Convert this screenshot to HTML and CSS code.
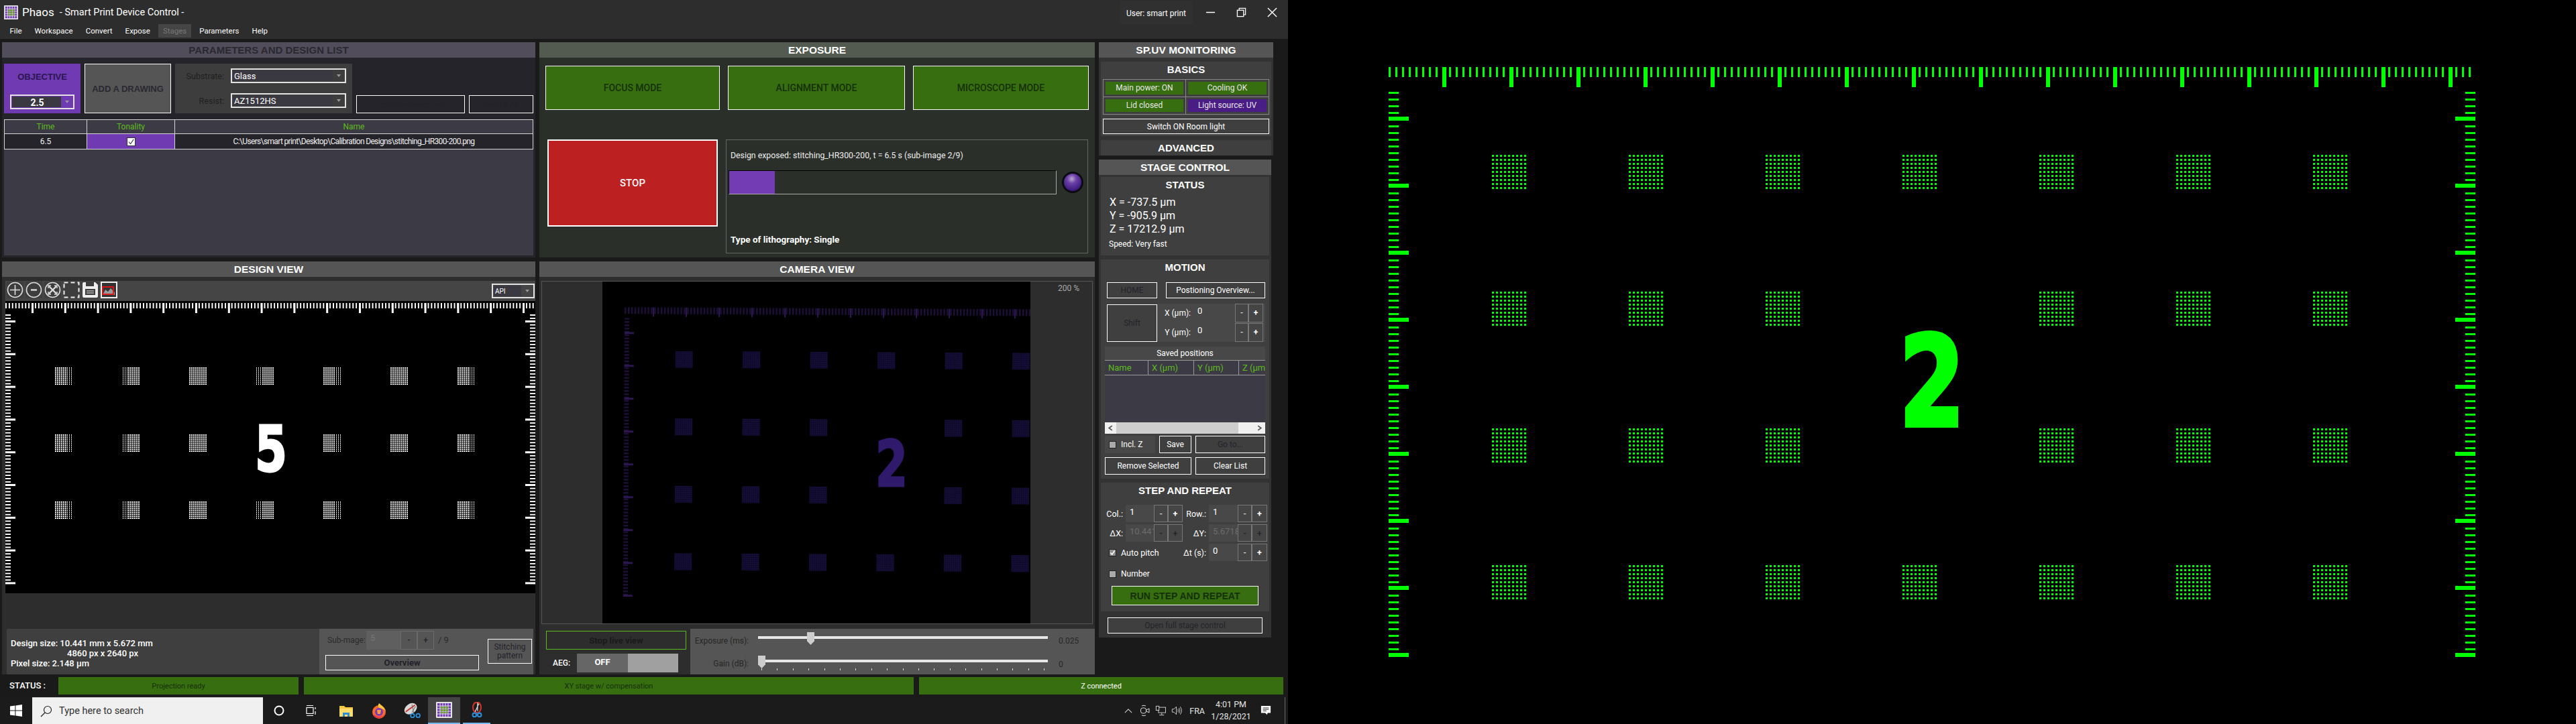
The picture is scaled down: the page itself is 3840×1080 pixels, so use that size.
FILE: index.html
```html
<!DOCTYPE html>
<html lang="en">
<head>
    <meta charset="UTF-8">
    <title>Phaos - Smart Print Device Control</title>
    <link rel="stylesheet" href="styles.css">
</head>
<body>
<svg class="defs" width="0" height="0">
    <defs>
        <symbol id="logo" viewBox="0 0 24 24">
            <rect width="24" height="24" rx="1" fill="#e4e4e4"/>
            <rect x="2" y="2" width="20" height="20" fill="#6f3ab2"/>
            <path d="M2 6h20M2 10h20M2 14h20M2 18h20M6 2v20M10 2v20M14 2v20M18 2v20" stroke="#e4e4e4" stroke-width="1"/>
            <path d="M7 7h3v3H7zM11 7h3v3h-3zM7 11h3v3H7zM11 11h3v3h-3zM15 7h3v3h-3zM15 11h3v3h-3zM7 15h3v2H7zM11 15h3v2h-3zM15 15h3v2h-3z" fill="#6aa51f"/>
        </symbol>
        <pattern id="photoTickTop" x="2070" y="100" width="10" height="15" patternUnits="userSpaceOnUse"><rect width="3" height="15" fill="#0f0"/></pattern>
        <pattern id="photoLongTop" x="2150" y="100" width="100" height="30" patternUnits="userSpaceOnUse"><rect width="6" height="30" fill="#0f0"/></pattern>
        <pattern id="photoTickSide" x="2070" y="137" width="15" height="10" patternUnits="userSpaceOnUse"><rect width="15" height="3" fill="#0f0"/></pattern>
        <pattern id="photoLongSide" x="2070" y="174" width="30" height="100" patternUnits="userSpaceOnUse"><rect width="30" height="6" fill="#0f0"/></pattern>
        <pattern id="photoDots" width="6" height="6" patternUnits="userSpaceOnUse"><rect width="3" height="3" fill="#0f0"/></pattern>
        <pattern id="photoBlocks" x="2224" y="231" width="204" height="204" patternUnits="userSpaceOnUse"><rect width="51" height="51" fill="url(#photoDots)"/></pattern>

        <pattern id="designTickTop" x="8" y="452" width="4.88" height="8" patternUnits="userSpaceOnUse"><rect width="1.7" height="8" fill="#fff" shape-rendering="crispEdges"/></pattern>
        <pattern id="designLongTop" x="47" y="452" width="48.8" height="15" patternUnits="userSpaceOnUse"><rect width="3" height="15" fill="#fff" shape-rendering="crispEdges"/></pattern>
        <pattern id="designTickSide" x="8" y="469" width="8" height="4.88" patternUnits="userSpaceOnUse"><rect width="8" height="1.7" fill="#fff" shape-rendering="crispEdges"/></pattern>
        <pattern id="designLongSide" x="8" y="478" width="15" height="48.8" patternUnits="userSpaceOnUse"><rect width="15" height="3" fill="#fff" shape-rendering="crispEdges"/></pattern>
        <pattern id="designDots" width="3" height="3" patternUnits="userSpaceOnUse"><rect width="2" height="2" fill="#fff" shape-rendering="crispEdges"/></pattern>
        <pattern id="designBlocks" x="82" y="548" width="100" height="100" patternUnits="userSpaceOnUse"><rect width="26" height="26" fill="url(#designDots)"/></pattern>
        <pattern id="designThin" x="82" y="0" width="3" height="3" patternUnits="userSpaceOnUse"><rect x="1" width="1" height="3" shape-rendering="crispEdges"/></pattern>

        <pattern id="camTickTop" x="931" y="460" width="4.9" height="10" patternUnits="userSpaceOnUse"><rect width="2.4" height="10" fill="#1e1038"/></pattern>
        <pattern id="camLongTop" x="973" y="460" width="49" height="14" patternUnits="userSpaceOnUse"><rect width="2" height="14" fill="#2c1750"/></pattern>
        <pattern id="camTickSide" x="931" y="476" width="7" height="4.9" patternUnits="userSpaceOnUse"><rect width="7" height="2.4" fill="#1e1038"/></pattern>
        <pattern id="camLongSide" x="931" y="497" width="14" height="49" patternUnits="userSpaceOnUse"><rect width="14" height="3" fill="#2c1750"/></pattern>
        <pattern id="camDots" width="3" height="3" patternUnits="userSpaceOnUse"><rect width="3" height="3" fill="#0b0822"/><rect width="2" height="2" fill="#1a1040"/></pattern>
        <pattern id="camBlocks" x="1007" y="525" width="100.5" height="100.6" patternUnits="userSpaceOnUse"><rect width="26" height="25" fill="url(#camDots)"/></pattern>
    </defs>
</svg>

<div class="app">
    <header class="chrome">
        <div class="titlebar">
            <svg class="app-logo"><use href="#logo"/></svg>
            <span class="app-name">Phaos</span>
            <span class="app-title">- Smart Print Device Control -</span>
            <span class="user">User: smart print</span>
            <svg class="win-btn" viewBox="0 0 16 16"><path d="M1 8h14" stroke="#fff" stroke-width="1.6"/></svg>
            <svg class="win-btn" viewBox="0 0 16 16" fill="none" stroke="#fff" stroke-width="1.4"><rect x="1.5" y="4.5" width="10" height="10"/><path d="M4.5 4V1.5h10v10H12"/></svg>
            <svg class="win-btn" viewBox="0 0 16 16"><path d="M1 1l14 14M15 1L1 15" stroke="#fff" stroke-width="1.5"/></svg>
        </div>
        <nav class="menubar">
            <span>File</span><span>Workspace</span><span>Convert</span><span>Expose</span><span class="menu-off">Stages</span><span>Parameters</span><span>Help</span>
        </nav>
    </header>

    <main class="main">
        <section class="panel params">
            <h2 class="panel-head">PARAMETERS AND DESIGN LIST</h2>
            <div class="param-top">
                <div class="objective">
                    <div class="objective-title">OBJECTIVE</div>
                    <div class="select select-obj"><span>2.5</span><i></i></div>
                </div>
                <div class="btn btn-drawing">ADD A DRAWING</div>
                <div class="substrate">
                    <label>Substrate:</label>
                    <div class="select"><span>Glass</span><i></i></div>
                    <label>Resist:</label>
                    <div class="select"><span>AZ1512HS</span><i></i></div>
                </div>
                <div class="btn btn-off btn-remove">Remove selected</div>
                <div class="btn btn-off btn-delete">Delete All</div>
            </div>
            <div class="design-table">
                <div class="cell cell-head">Time</div>
                <div class="cell cell-head">Tonality</div>
                <div class="cell cell-head">Name</div>
                <div class="cell">6.5</div>
                <div class="cell cell-purple"><span class="tick-box">
                    <svg viewBox="0 0 12 12"><path d="M2 6l3 3.5L10 2" fill="none" stroke="#333" stroke-width="1.2"/></svg></span></div>
                <div class="cell cell-path">C:\Users\smart print\Desktop\Calibration Designs\stitching_HR300-200.png</div>
            </div>
            <div class="design-list"></div>
        </section>

        <section class="panel exposure">
            <h2 class="panel-head panel-head-light">EXPOSURE</h2>
            <div class="modes">
                <div class="btn btn-mode mode-focus">FOCUS MODE</div>
                <div class="btn btn-mode mode-align">ALIGNMENT MODE</div>
                <div class="btn btn-mode mode-micro">MICROSCOPE MODE</div>
            </div>
            <div class="run-row">
                <div class="stop">STOP</div>
                <div class="run-info">
                    <div class="run-text">Design exposed: stitching_HR300-200, t = 6.5 s (sub-image 2/9)</div>
                    <div class="run-bar-row">
                        <div class="run-bar"><div class="run-fill" style="width: 14%"></div></div>
                        <div class="led"></div>
                    </div>
                    <div class="run-type">Type of lithography: Single</div>
                </div>
            </div>
        </section>

        <aside class="side">
            <section class="panel monitoring">
                <h2 class="panel-head panel-head-light">SP.UV MONITORING</h2>
                <div class="box basics">
                    <h3 class="box-title">BASICS</h3>
                    <div class="state-grid">
                        <div class="state-cell"><span class="state">Main power: ON</span></div>
                        <div class="state-cell"><span class="state">Cooling OK</span></div>
                        <div class="state-cell"><span class="state">Lid closed</span></div>
                        <div class="state-cell"><span class="state state-uv">Light source: UV</span></div>
                    </div>
                    <div class="btn btn-room">Switch ON Room light</div>
                </div>
                <div class="box advanced"><h3 class="box-title">ADVANCED</h3></div>
            </section>

            <section class="panel stage">
                <h2 class="panel-head panel-head-light">STAGE CONTROL</h2>
                <div class="box status-box">
                    <h3 class="box-title">STATUS</h3>
                    <div class="coords">
                        <div>X = -737.5 µm</div>
                        <div>Y = -905.9 µm</div>
                        <div>Z = 17212.9 µm</div>
                    </div>
                    <div class="speed">Speed: Very fast</div>
                </div>

                <div class="box motion">
                    <h3 class="box-title box-title-tall">MOTION</h3>
                    <div class="motion-row">
                        <div class="btn btn-off btn-home">HOME</div>
                        <div class="btn btn-pos">Postioning Overview...</div>
                    </div>
                    <div class="motion-row shift-row">
                        <div class="btn btn-off btn-shift">Shift</div>
                        <div class="shift-grid">
                            <label>X (µm):</label>
                            <div class="field">0</div><div class="spin">-</div><div class="spin spin-plus">+</div>
                            <label>Y (µm):</label>
                            <div class="field">0</div><div class="spin">-</div><div class="spin spin-plus">+</div>
                        </div>
                    </div>
                    <div class="saved">
                        <div class="saved-head">Saved positions</div>
                        <div class="saved-cols">
                            <span>Name</span><span>X (µm)</span><span>Y (µm)</span><span>Z (µm)</span>
                        </div>
                        <div class="saved-list"></div>
                        <div class="scroll">
                            <svg class="scroll-arrow" viewBox="0 0 8 8"><path d="M6 1L2 4l4 3" fill="none" stroke="#555" stroke-width="1.6"/></svg>
                            <div class="scroll-thumb"></div>
                            <svg class="scroll-arrow" viewBox="0 0 8 8"><path d="M2 1l4 3-4 3" fill="none" stroke="#555" stroke-width="1.6"/></svg>
                        </div>
                        <div class="saved-actions">
                            <div class="incl"><span class="check"></span>Incl. Z</div>
                            <div class="btn">Save</div>
                            <div class="btn btn-off">Go to...</div>
                            <div class="btn btn-wide">Remove Selected</div>
                            <div class="btn btn-clear">Clear List</div>
                        </div>
                    </div>
                </div>

                <div class="box repeat">
                    <h3 class="box-title box-title-step">STEP AND REPEAT</h3>
                    <div class="repeat-grid">
                        <label>Col.:</label><div class="field">1</div><div class="spin">-</div><div class="spin spin-plus">+</div>
                        <label>Row.:</label><div class="field">1</div><div class="spin">-</div><div class="spin spin-plus">+</div>
                        <label>ΔX:</label><div class="field field-off">10.441</div><div class="spin spin-off">-</div><div class="spin spin-off">+</div>
                        <label>ΔY:</label><div class="field field-off">5.6718</div><div class="spin spin-off">-</div><div class="spin spin-off">+</div>
                        <div class="check-line"><span class="check check-on"><svg viewBox="0 0 12 12"><path d="M2 6l3 3.5L10 2" fill="none" stroke="#fff" stroke-width="2"/></svg></span>Auto pitch</div>
                        <label>Δt (s):</label><div class="field">0</div><div class="spin">-</div><div class="spin spin-plus">+</div>
                    </div>
                    <div class="check-line number-line"><span class="check"></span>Number</div>
                    <div class="btn btn-run">RUN STEP AND REPEAT</div>
                </div>
                <div class="btn btn-off btn-full">Open full stage control</div>
            </section>
        </aside>

        <section class="panel design">
            <h2 class="panel-head">DESIGN VIEW</h2>
            <div class="toolbar">
                <svg class="tool" viewBox="0 0 25 25" fill="none" stroke="#ddd" stroke-width="1.6"><circle cx="12.500" cy="12.500" r="11"/><path d="M12.500 5v15M5 12.500h15"/></svg>
                <svg class="tool" viewBox="0 0 25 25" fill="none" stroke="#ddd" stroke-width="1.6"><circle cx="12.500" cy="12.500" r="11"/><path d="M8 12.500h9" stroke-width="2.400"/></svg>
                <svg class="tool" viewBox="0 0 25 25" fill="none" stroke="#ddd" stroke-width="1.6"><circle cx="12.500" cy="12.500" r="11"/><path d="M7 7l11 11M18 7L7 18" stroke-width="2.400"/><path d="M6 10V6h4M19 10V6h-4M6 15v4h4M19 15v4h-4" stroke-width="1.400"/></svg>
                <svg class="tool" viewBox="0 0 25 25" fill="none" stroke="#eee" stroke-width="2" stroke-dasharray="6 4"><rect x="1.500" y="1.500" width="22" height="22"/></svg>
                <svg class="tool" viewBox="0 0 25 25"><path d="M1 3q0-2 2-2h17l4 4v17q0 2-2 2H3q-2 0-2-2z" fill="#eee"/><rect x="6" y="1" width="12" height="6" fill="#3d3d3d"/><rect x="5" y="11" width="15" height="9" fill="#3d3d3d"/><path d="M7 14h11M7 17h11" stroke="#eee"/></svg>
                <svg class="tool tool-image" viewBox="0 0 25 25"><rect x="1" y="1" width="23" height="23" fill="#333" stroke="#eee" stroke-width="2"/><path d="M3 20l4-8 4 3 4-5 6 6v4H3z" fill="#999"/><rect x="3" y="8" width="16" height="11" fill="none" stroke="#e21212" stroke-width="1.800"/></svg>
                <div class="select select-view"><span>API</span><i></i></div>
            </div>
            <div class="design-canvas">
                <svg class="design-svg" viewBox="8 449 790 436" width="790" height="436">
                    <rect x="8" y="452" width="788" height="8" fill="url(#designTickTop)"/>
                    <rect x="8" y="452" width="788" height="15" fill="url(#designLongTop)"/>
                    <rect x="8" y="469" width="8" height="403" fill="url(#designTickSide)"/>
                    <rect x="8" y="469" width="15" height="403" fill="url(#designLongSide)"/>
                    <rect x="790" y="469" width="8" height="403" fill="url(#designTickSide)"/>
                    <rect x="783" y="478" width="15" height="394" fill="url(#designLongSide)"/>
                    <rect x="82" y="548" width="626" height="226" fill="url(#designBlocks)"/>
                    <rect x="99" y="548" width="9" height="226" fill="url(#designThin)"/>
                    <rect x="182" y="548" width="9" height="226" fill="url(#designThin)"/>
                    <rect x="299" y="548" width="9" height="226" fill="url(#designThin)"/>
                    <rect x="382" y="548" width="9" height="226" fill="url(#designThin)"/>
                    <rect x="499" y="548" width="9" height="226" fill="url(#designThin)"/>
                    <rect x="582" y="548" width="9" height="226" fill="url(#designThin)"/>
                    <rect x="699" y="548" width="9" height="226" fill="url(#designThin)"/>
                    <rect x="380" y="646" width="30" height="30"/>
                    <text class="digit digit-design" x="404" y="703" textLength="48" lengthAdjust="spacingAndGlyphs">5</text>
                </svg>
            </div>
            <div class="design-bottom">
                <div class="design-info">
                    <div>Design size: 10.441 mm x 5.672 mm</div>
                    <div class="info-indent">4860 px x 2640 px</div>
                    <div>Pixel size: 2.148 µm</div>
                </div>
                <div class="sub-image">
                    <div class="sub-left">
                        <div class="sub-row">
                            <label>Sub-mage:</label>
                            <div class="field field-off sub-field">5</div>
                            <div class="spin spin-off sub-spin">-</div>
                            <div class="spin spin-off sub-spin">+</div>
                            <span class="sub-total">/ 9</span>
                        </div>
                        <div class="btn btn-off btn-overview">Overview</div>
                    </div>
                    <div class="btn btn-off btn-stitch">Stitching<br>pattern</div>
                </div>
            </div>
        </section>

        <section class="panel camera">
            <h2 class="panel-head">CAMERA VIEW</h2>
            <div class="camera-frame">
                <svg class="camera-svg" viewBox="899 420 638 510" width="638" height="510">
                    <g transform="rotate(0.3 1270 675)">
                        <rect x="931" y="460" width="610" height="10" fill="url(#camTickTop)"/>
                        <rect x="931" y="460" width="610" height="14" fill="url(#camLongTop)"/>
                        <rect x="931" y="476" width="7" height="416" fill="url(#camTickSide)"/>
                        <rect x="931" y="476" width="14" height="416" fill="url(#camLongSide)"/>
                        <rect x="1007" y="525" width="540" height="330" fill="url(#camBlocks)"/>
                        <rect x="1305" y="622" width="34" height="132"/>
                    </g>
                    <text class="digit digit-camera" x="1330" y="725" textLength="48" lengthAdjust="spacingAndGlyphs">2</text>
                </svg>
                <span class="zoom-label">200 %</span>
            </div>
            <div class="camera-bottom">
                <div class="live">
                    <div class="btn-live">Stop live view</div>
                    <div class="aeg">
                        <span class="aeg-label">AEG:</span>
                        <div class="toggle"><span class="toggle-off">OFF</span><span class="toggle-knob"></span></div>
                    </div>
                </div>
                <div class="sliders">
                    <label>Exposure (ms):</label>
                    <div class="slider"><div class="track"></div><div class="thumb thumb-exposure"></div></div>
                    <span class="slider-val">0.025</span>
                    <label>Gain (dB):</label>
                    <div class="slider"><div class="track"></div><div class="thumb"></div><div class="slider-ticks"></div></div>
                    <span class="slider-val">0</span>
                </div>
            </div>
        </section>
    </main>

    <div class="statusbar">
        <span class="status-label">STATUS :</span>
        <div class="status-cell">Projection ready</div>
        <div class="status-cell">XY stage w/ compensation</div>
        <div class="status-cell status-lit">Z connected</div>
    </div>

    <footer class="taskbar">
        <svg class="win-logo" viewBox="0 0 18 18"><path d="M0 2.600l7.400-1v7H0zM8.400 1.400L18 0v8.600H8.400zM0 9.600h7.400v7l-7.400-1zM8.400 9.600H18V18l-9.600-1.400z" fill="#fff"/></svg>
        <div class="search">
            <svg class="search-icon" viewBox="0 0 18 18" fill="none" stroke="#222" stroke-width="1.2"><circle cx="11" cy="7" r="5.500"/><path d="M7 11l-6 6"/></svg>
            <span>Type here to search</span>
        </div>
        <svg class="task-icon cortana" viewBox="0 0 18 18"><circle cx="9" cy="9" r="6.500" fill="none" stroke="#fff" stroke-width="2"/></svg>
        <svg class="task-icon taskview" viewBox="0 0 18 18" fill="none" stroke="#fff" stroke-width="1.2"><rect x="2" y="4.500" width="10" height="9"/><path d="M2 1.500h10M2 16.500h10M15 4v3M15 10v5"/></svg>
        <svg class="task-icon explorer" viewBox="0 0 22 20"><path d="M1 3h7l2 2h11v14H1z" fill="#f5c542"/><rect x="1" y="7" width="20" height="12" fill="#ffdc6b"/><rect x="6" y="13" width="10" height="6" fill="#2a8fd8"/><rect x="9" y="16" width="4" height="3" fill="#ffdc6b"/></svg>
        <svg class="task-icon firefox" viewBox="0 0 24 24"><circle cx="12" cy="14" r="10" fill="#ff6a2b"/><path d="M12 1c3 3 8 5 10 12-2-3-5-4-7-4-3 0-6-3-3-8z" fill="#ffc83d"/><circle cx="12" cy="14" r="6" fill="#7a3ab8"/><path d="M5 18c3 4 11 5 16-1-3 6-12 8-17 3z" fill="#e8265e"/><path d="M9 11l6 0-1 6-4 0z" fill="#ff9a3d"/></svg>
        <svg class="task-icon snip" viewBox="0 0 28 26"><ellipse cx="12" cy="10" rx="11" ry="8" fill="#d8d8d8" transform="rotate(-35 12 10)"/><path d="M4 15L19 4" stroke="#c9342b" stroke-width="2"/><path d="M14 3l3 13M20 6l-6 10" stroke="#777" stroke-width="1.2"/><circle cx="15" cy="21" r="3" fill="none" stroke="#2a8fd8" stroke-width="2"/><circle cx="24" cy="21" r="3" fill="none" stroke="#2a8fd8" stroke-width="2"/></svg>
        <div class="task-active"><svg class="task-logo"><use href="#logo"/></svg></div>
        <div class="task-open">
            <svg class="task-logo" viewBox="0 0 22 26"><ellipse cx="11" cy="9" rx="6.500" ry="8.500" fill="none" stroke="#c9342b" stroke-width="2.400"/><path d="M12 1v14M8 16l6-13" stroke="#ddd" stroke-width="1.400"/><circle cx="7" cy="21" r="3" fill="none" stroke="#2a8fd8" stroke-width="2.200"/><circle cx="15" cy="21" r="3" fill="none" stroke="#2a8fd8" stroke-width="2.200"/></svg>
        </div>
        <div class="tray">
            <svg class="tray-icon chevron" viewBox="0 0 14 10"><path d="M1 8l6-6 6 6" fill="none" stroke="#ddd" stroke-width="1.2"/></svg>
            <svg class="tray-icon tray-cam" viewBox="0 0 16 18" fill="none" stroke="#ddd"><rect x="1.500" y="5" width="8" height="8" rx="3"/><path d="M10 8l4-2v6l-4-2M3 2q3-1.500 6 0M3 16q3 1.500 6 0"/></svg>
            <svg class="tray-icon" viewBox="0 0 18 18" fill="none" stroke="#ddd"><rect x="5.500" y="3.500" width="12" height="9"/><rect x="1.500" y="1.500" width="5" height="7" fill="#1b1b1b"/><path d="M11 13v3M7 16.500h8"/></svg>
            <svg class="tray-icon tray-vol" viewBox="0 0 18 18" fill="none" stroke="#ddd"><path d="M1.500 6.500h3l4-4v13l-4-4h-3zM11 6.500q1.500 2.500 0 5M13 4.500q3 4.500 0 9M15 2.500q4.500 6.500 0 13"/></svg>
            <span class="tray-lang">FRA</span>
            <div class="clock"><div>4:01 PM</div><div>1/28/2021</div></div>
            <svg class="tray-icon notify" viewBox="0 0 18 18"><path d="M1 1h16v12h-5l-1 3-3-3H1z" fill="#fff"/><path d="M4 4.500h10M4 7h10M4 9.500h6" stroke="#1b1b1b"/></svg>
            <div class="show-desktop"></div>
        </div>
    </footer>
</div>

<div class="photo">
    <svg viewBox="1920 0 1920 1080" width="1920" height="1080">
        <rect x="2070" y="100" width="1620" height="15" fill="url(#photoTickTop)"/>
        <rect x="2150" y="100" width="1510" height="30" fill="url(#photoLongTop)"/>
        <rect x="2070" y="137" width="15" height="843" fill="url(#photoTickSide)"/>
        <rect x="2070" y="137" width="30" height="843" fill="url(#photoLongSide)"/>
        <rect x="3675" y="137" width="15" height="843" fill="url(#photoTickSide)"/>
        <rect x="3660" y="137" width="30" height="843" fill="url(#photoLongSide)"/>
        <rect x="2224" y="231" width="1275" height="690" fill="url(#photoBlocks)"/>
        <rect x="2830" y="430" width="60" height="265"/>
        <text class="digit digit-photo" x="2880" y="635" textLength="98" lengthAdjust="spacingAndGlyphs">2</text>
    </svg>
</div>
</body>
</html>
```

FILE: styles.css
```css
* {
    margin: 0;
    padding: 0;
    box-sizing: border-box;
}
body {
    width: 3840px;
    height: 1080px;
    display: flex;
    background: #000;
    overflow: hidden;
    font-family: Roboto, "Liberation Sans", sans-serif;
    font-size: 12px;
    color: #fff;
}
.defs {
    position: absolute;
}
.app {
    width: 1920px;
    height: 1080px;
    flex: none;
    display: flex;
    flex-direction: column;
    background: #1a1a1a;
}
.photo {
    width: 1920px;
    height: 1080px;
    flex: none;
}
.photo svg {
    display: block;
}

/* title and menu */
.chrome {
    height: 58px;
    background: #2d2d2d;
}
.titlebar {
    height: 36px;
    display: flex;
    align-items: center;
    padding-left: 6px;
}
.app-logo {
    width: 21px;
    height: 21px;
}
.app-name {
    margin-left: 6px;
    font-size: 17px;
}
.app-title {
    margin-left: 8px;
    font-size: 14.5px;
    flex: 1;
}
.user {
    width: 109px;
    height: 35px;
    line-height: 38px;
    text-align: center;
    background: #303030;
    font-size: 12px;
    margin-right: 19px;
}
.win-btn {
    width: 15px;
    height: 15px;
    margin-right: 31px;
}
.win-btn:last-child {
    margin-right: 16px;
}
.menubar {
    height: 22px;
    display: flex;
    padding-left: 5px;
    align-items: flex-start;
    font-size: 11.5px;
}
.menubar span {
    height: 20px;
    line-height: 20px;
    padding: 0 9.5px;
}
.menubar .menu-off {
    background: #454545;
    color: #777;
    padding: 0 7px;
    margin: 0 2.5px;
}

/* main layout */
.main {
    height: 943px;
    margin: 5px 0 0 3px;
    display: grid;
    grid-template-columns: 795px 828px 260px;
    grid-template-rows: 321px 616px;
    column-gap: 6px;
    row-gap: 6px;
}
.panel {
    display: flex;
    flex-direction: column;
    background: #2d2d2d;
}
.panel-head {
    height: 23px;
    flex: none;
    line-height: 23px;
    text-align: center;
    background: #555;
    font-family: "Liberation Sans", sans-serif;
    font-size: 15.5px;
    font-weight: bold;
    color: #fff;
}
.btn {
    display: flex;
    align-items: center;
    justify-content: center;
    border: 1px solid #fff;
    color: #fff;
    background: transparent;
}
.btn-off {
    color: #24222a;
}

/* parameters */
.params {
    background: #26242b;
}
.params .panel-head {
    background: #514d5a;
    color: #2a2830;
    font-size: 15px;
}
.param-top {
    height: 74px;
    margin: 9px 3px 0;
    display: flex;
    gap: 6px;
    align-items: flex-end;
}
.objective {
    width: 114px;
    height: 74px;
    padding: 0 9px;
    background: #6f3ab2;
    text-align: center;
}
.objective-title {
    margin-top: 12px;
    font-family: "Liberation Sans", sans-serif;
    font-size: 13px;
    font-weight: bold;
    color: #2a1650;
}
.select {
    height: 22px;
    display: flex;
    align-items: stretch;
    border: 2px solid #e2e2e2;
    font-size: 13px;
    position: relative;
}
.select span {
    flex: 1;
    padding-left: 2px;
    background: #3a3840;
    line-height: 18px;
    margin: 1px 0 1px 1px;
}
.select i {
    width: 18px;
    position: relative;
}
.select i::after {
    content: "";
    position: absolute;
    left: 6px;
    top: 7px;
    border: 3px solid transparent;
    border-top: 4px solid #999;
}
.select-obj {
    margin-top: 19px;
    font-size: 14px;
    font-weight: bold;
}
.btn-drawing {
    width: 129px;
    height: 74px;
    background: #555;
    color: #2a2830;
    font-family: "Liberation Sans", sans-serif;
    font-size: 13px;
    font-weight: bold;
}
.substrate {
    width: 264px;
    height: 74px;
    padding: 7px 9px 0 0;
    background: #3d3d3d;
    display: grid;
    grid-template-columns: 73px 172px;
    column-gap: 10px;
    row-gap: 15px;
    grid-auto-rows: 22px;
    align-items: center;
}
.substrate label {
    padding: 0;
    text-align: right;
    font-size: 12.5px;
    color: #1f1f1f;
}
.btn-remove {
    width: 162px;
    height: 27px;
    font-size: 13px;
}
.btn-delete {
    width: 96px;
    height: 27px;
    font-size: 13px;
}
.design-table {
    margin: 9px 3px 0;
    display: grid;
    grid-template-columns: 123px 131px 1fr;
    grid-template-rows: 21px 23px;
    border: 1px solid #d4d4d4;
    border-bottom: none;
    background: #26242b;
}
.cell {
    display: flex;
    align-items: center;
    justify-content: center;
    border-right: 1px solid #d4d4d4;
    border-bottom: 1px solid #d4d4d4;
    font-size: 12px;
    color: #eee;
}
.cell:nth-child(3n) {
    border-right: none;
}
.cell-head {
    background: #3c3a44;
    color: #5cbb1c;
}
.cell-purple {
    background: #6f3ab2;
}
.cell-path {
    letter-spacing: -0.65px;
}
.tick-box {
    width: 13px;
    height: 13px;
    background: #fff;
    border: 1px solid #333;
    display: block;
}
.tick-box svg {
    display: block;
}
.design-list {
    margin: 0 3px 3px;
    flex: 1;
    background: #3c3a44;
}

/* exposure */
.exposure {
    background: #2b2f2a;
}
.panel-head-light {
    background: #555;
}
.exposure .panel-head {
    background: #535a50;
}
.modes {
    margin: 12px 9px 0;
    display: flex;
    gap: 12px;
}
.btn-mode {
    height: 66px;
    background: #376e10;
    color: #15300a;
    font-size: 14px;
    font-weight: 500;
}
.mode-focus { width: 260px; }
.mode-align { width: 264px; }
.mode-micro { width: 262px; }
.run-row {
    display: flex;
    align-items: flex-start;
    margin: 44px 0 0 12px;
}
.stop {
    width: 254px;
    height: 130px;
    display: flex;
    align-items: center;
    justify-content: center;
    background: #bd2020;
    border: 2px solid #fff;
    font-size: 15px;
    font-weight: 500;
}
.run-info {
    width: 540px;
    height: 170px;
    margin-left: 12px;
    padding: 16px 3px 0;
    display: flex;
    flex-direction: column;
    border: 1px solid #666;
}
.run-text {
    margin-left: 3px;
    height: 16px;
    font-size: 12.3px;
    color: #eee;
}
.run-bar-row {
    margin-top: 13px;
    display: flex;
    align-items: center;
    gap: 8px;
}
.run-bar {
    width: 489px;
    height: 36px;
    border-top: 1px solid #000;
    border-left: 1px solid #000;
    border-right: 1px solid #aaa;
    border-bottom: 1px solid #aaa;
}
.run-fill {
    height: 100%;
    background: #733cb4;
}
.led {
    width: 32px;
    height: 32px;
    border-radius: 50%;
    border: 3px solid #0b0b12;
    background: radial-gradient(circle at 45% 30%, #b9a9cf 0, #6b3fa8 30%, #3a1a7a 75%);
}
.run-type {
    margin: auto 0 12px 3px;
    font-size: 13.5px;
    font-weight: 700;
}

/* right column */
.side {
    grid-row: 1 / 3;
    grid-column: 3;
    display: flex;
    flex-direction: column;
    gap: 6px;
}
.monitoring {
    height: 169px;
    background: #333;
}
.stage {
    width: 257px;
    height: 713px;
    background: #333;
}
.box {
    background: #3f3f3f;
}
.box-title {
    height: 24px;
    line-height: 24px;
    text-align: center;
    font-family: "Liberation Sans", sans-serif;
    font-size: 15px;
    font-weight: bold;
}
.basics {
    margin: 6px 3px 0;
    height: 111px;
}
.basics .box-title {
    height: 26px;
}
.state-grid {
    margin: 0 3px;
    height: 53px;
    display: grid;
    grid-template-columns: 123px 1fr;
    grid-template-rows: 1fr 1fr;
    border: 1px solid #888;
}
.state-cell {
    padding: 3px;
    display: flex;
}
.state-cell:nth-child(odd) {
    border-right: 1px solid #888;
}
.state-cell:nth-child(-n+2) {
    border-bottom: 1px solid #888;
}
.state {
    flex: 1;
    display: flex;
    align-items: center;
    justify-content: center;
    background: #376e10;
    color: #e6e6e6;
}
.state-uv {
    background: #4a1d86;
}
.btn-room {
    margin: 6px 3px 0;
    height: 23px;
}
.advanced {
    margin: 6px 3px 0;
    height: 23px;
}
.status-box {
    margin: 3px 3px 0;
    height: 117px;
}
.coords {
    margin: 4px 0 0 13px;
    font-size: 16px;
    line-height: 20px;
}
.speed {
    margin: 5px 0 0 12px;
}
.motion {
    margin: 6px 3px 0;
    height: 327px;
}
.box-title-tall {
    height: 34px;
}
.motion-row {
    display: flex;
    margin-left: 9px;
}
.btn-home {
    width: 75px;
    height: 24px;
}
.btn-pos {
    width: 148px;
    height: 24px;
    margin-left: 13px;
}
.shift-row {
    margin-top: 9px;
}
.btn-shift {
    width: 75px;
    height: 56px;
}
.shift-grid {
    width: 161px;
    height: 57px;
    margin-top: -1px;
    display: grid;
    grid-template-columns: 54px 62px 20px 22px;
    grid-auto-rows: 28px;
    row-gap: 1px;
    background: #484848;
    align-items: stretch;
}
label {
    display: flex;
    align-items: center;
    justify-content: flex-end;
    padding-right: 4px;
}
.field {
    padding: 3px 0 0 6px;
    background: #484848;
    overflow: hidden;
    white-space: nowrap;
    font-size: 13px;
}
.field-off {
    color: #6c6c6c;
}
.spin {
    display: flex;
    align-items: center;
    justify-content: center;
    border: 1px solid #777;
    background: #454545;
    color: #ddd;
    font-weight: 500;
}
.spin-plus {
    color: #fff;
    font-weight: bold;
}
.spin-off {
    color: #222;
}
.saved {
    width: 239px;
    margin: 7px 0 0 6px;
}
.saved-head {
    height: 20px;
    line-height: 20px;
    text-align: center;
    background: #484848;
}
.saved-cols {
    height: 23px;
    display: grid;
    grid-template-columns: 65px 68px 67px 1fr;
    overflow: hidden;
    background: #3c3a44;
    border-top: 1px solid #999;
    border-bottom: 1px solid #999;
    color: #5cbb1c;
    font-size: 13px;
    line-height: 21px;
}
.saved-cols span {
    padding-left: 5px;
    border-right: 1px solid #999;
    white-space: nowrap;
}
.saved-cols span:last-child {
    border-right: none;
}
.saved-list {
    height: 70px;
    background: #3c3a44;
}
.scroll {
    height: 17px;
    display: flex;
    align-items: stretch;
    justify-content: space-between;
    background: #f0f0f0;
}
.scroll-arrow {
    width: 17px;
    height: 17px;
    padding: 4px;
}
.scroll-thumb {
    width: 182px;
    margin-right: auto;
    background: #cdcdcd;
}
.saved-actions {
    margin-top: 3px;
    display: grid;
    grid-template-columns: 75px 48px 104px;
    grid-auto-rows: 26px;
    column-gap: 6px;
    row-gap: 6px;
}
.incl {
    display: flex;
    align-items: center;
    background: #484848;
}
.check {
    width: 11px;
    height: 11px;
    margin: 0 7px 0 6px;
    background: #aaa;
    border: 1px solid #222;
    flex: none;
}
.check svg {
    display: block;
}
.btn-wide {
    grid-column: 1 / 3;
}
.repeat {
    margin: 6px 3px 0;
    height: 192px;
}
.box-title-step {
    height: 33px;
    line-height: 24px;
}
.repeat-grid {
    display: grid;
    grid-template-columns: 37px 42px 21px 22px 39px 43px 21px 23px;
    grid-auto-rows: 26px;
    row-gap: 3px;
    font-size: 12.5px;
}
.repeat-grid .check-line {
    grid-column: 1 / 5;
}
.check-line {
    display: flex;
    align-items: center;
    padding-left: 6px;
}
.check-on {
    background: #8f8f8f;
}
.number-line {
    height: 37px;
    padding-top: 1px;
}
.btn-run {
    width: 219px;
    height: 29px;
    margin-left: 16px;
    background: #376e10;
    color: #15300a;
    font-family: "Liberation Sans", sans-serif;
    font-size: 14px;
    font-weight: bold;
}
.btn-full {
    width: 231px;
    height: 24px;
    margin: 9px 0 0 13px;
    background: #3f3f3f;
}

/* design view */
.toolbar {
    height: 30px;
    margin: 6px 0 0 5px;
    padding: 1px 0 0 2px;
    display: flex;
    gap: 3px;
    background: #454545;
    position: relative;
}
.tool {
    width: 25px;
    height: 25px;
    background: #3d3d3d;
}
.tool-image {
    background: none;
}
.select-view {
    width: 64px;
    margin: 3px 1px 0 auto;
    font-size: 10px;
}
.design-canvas {
    height: 436px;
    margin-left: 5px;
    background: #000;
}
.design-svg {
    display: block;
}
.digit {
    font-family: "DejaVu Sans", sans-serif;
    font-weight: bold;
    text-anchor: middle;
}
.digit-design {
    font-size: 94px;
    fill: #fff;
    stroke: #fff;
    stroke-width: 3px;
}
.digit-camera {
    font-size: 94px;
    fill: #2f1a6b;
    stroke: #2f1a6b;
    stroke-width: 3px;
}
.digit-photo {
    font-size: 188px;
    fill: #0f0;
    stroke: #0f0;
    stroke-width: 6px;
}
.design-bottom {
    height: 68px;
    margin: 53px 3px 0 7px;
    display: flex;
}
.design-info {
    width: 466px;
    padding: 14px 0 0 6px;
    background: #3f3f3f;
    font-size: 13px;
    font-weight: 500;
    line-height: 15px;
}
.info-indent {
    margin-left: 84px;
}
.sub-image {
    flex: 1;
    padding: 3px 2px 0 9px;
    display: flex;
    background: #555;
}
.sub-left {
    width: 229px;
}
.sub-row {
    height: 28px;
    display: flex;
    color: #2a2a2a;
}
.sub-row label {
    width: 61px;
    justify-content: flex-start;
    padding: 0 0 0 3px;
}
.sub-field {
    width: 51px;
    background: #5f5f5f;
    color: #777;
}
.sub-spin {
    width: 25px;
    background: #555;
    border-color: #6a6a6a;
}
.sub-total {
    margin-left: 6px;
    line-height: 28px;
    color: #2a2a2a;
    font-size: 13px;
}
.btn-overview {
    height: 23px;
    margin-top: 8px;
    font-weight: bold;
    font-size: 13px;
}
.btn-stitch {
    width: 66px;
    height: 37px;
    margin: 12px 0 0 13px;
    text-align: center;
    line-height: 13px;
}

/* camera view */
.camera-frame {
    height: 512px;
    margin: 6px 3px 0;
    display: flex;
    justify-content: center;
    position: relative;
    border: 1px solid #555;
    padding-right: 0;
}
.camera-svg {
    display: block;
    background: #000;
    margin-right: 2px;
    filter: blur(0.6px);
}
.zoom-label {
    position: absolute;
    right: 19px;
    top: 3px;
    color: #aaa;
}
.camera-bottom {
    height: 68px;
    margin-top: 7px;
    display: flex;
}
.live {
    width: 225px;
    padding: 3px 0 0 10px;
}
.btn-live {
    width: 209px;
    height: 28px;
    display: flex;
    align-items: center;
    justify-content: center;
    border: 1px solid #57b81f;
    color: #1a1a1a;
    font-size: 13px;
    font-weight: bold;
}
.aeg {
    margin-top: 6px;
    display: flex;
    align-items: center;
}
.aeg-label {
    width: 46px;
    padding-left: 10px;
    font-weight: 500;
}
.toggle {
    width: 151px;
    height: 28px;
    display: flex;
}
.toggle-off {
    width: 76px;
    line-height: 26px;
    text-align: center;
    background: #666;
    font-weight: bold;
    font-size: 13px;
}
.toggle-knob {
    flex: 1;
    background: #a0a0a0;
}
.sliders {
    flex: 1;
    display: grid;
    grid-template-columns: 87px 432px 1fr;
    grid-template-rows: 35px 33px;
    column-gap: 14px;
    padding-left: 0;
    background: #555;
    color: #262626;
}
.sliders label {
    padding: 0;
}
.slider {
    position: relative;
}
.track {
    position: absolute;
    left: 0;
    right: 0;
    top: 11px;
    height: 4px;
    background: #e7e7e7;
}
.thumb {
    position: absolute;
    left: 0;
    top: 5px;
    width: 11px;
    height: 19px;
    background: #cdcdcd;
    clip-path: polygon(0 0, 100% 0, 100% 70%, 50% 100%, 0 70%);
}
.thumb-exposure {
    left: 73px;
}
.slider-ticks {
    position: absolute;
    left: 5px;
    top: 24px;
    width: 423px;
    height: 3px;
    background: repeating-linear-gradient(to right, #ddd 0 1px, transparent 1px 23.4px);
}
.slider-val {
    line-height: 36px;
    padding-left: 2px;
}

/* status + taskbar */
.statusbar {
    height: 26px;
    margin-top: 4px;
    display: grid;
    grid-template-columns: 65px 358px 909px 543px;
    column-gap: 8px;
    padding-left: 14px;
    margin-bottom: 4px;
    align-items: stretch;
}
.status-label {
    line-height: 26px;
    font-size: 13px;
    font-weight: 500;
    white-space: nowrap;
}
.status-cell {
    display: flex;
    align-items: center;
    justify-content: center;
    background: #376e10;
    color: #15300a;
    font-size: 11px;
}
.status-lit {
    color: #fff;
}
.taskbar {
    height: 40px;
    display: flex;
    align-items: center;
    background: #1b1b1b;
    position: relative;
}
.win-logo {
    width: 18px;
    height: 18px;
    margin-left: 15px;
}
.search {
    width: 344px;
    height: 40px;
    margin-left: 15px;
    padding-left: 12px;
    display: flex;
    align-items: center;
    background: #f0f0f0;
    border-top: 1px solid #ccc;
    color: #333;
    font-size: 14.5px;
}
.search-icon {
    width: 18px;
    height: 18px;
    margin-right: 10px;
}
.task-icon {
    flex: none;
    height: 24px;
}
.cortana {
    width: 18px;
    margin-left: 15px;
}
.taskview {
    width: 18px;
    margin-left: 30px;
}
.explorer {
    width: 22px;
    margin-left: 32px;
}
.firefox {
    width: 24px;
    margin-left: 26px;
}
.snip {
    width: 28px;
    margin-left: 23px;
}
.task-active,
.task-open {
    height: 40px;
    display: flex;
    align-items: center;
    justify-content: center;
    border-bottom: 2px solid #76b9ed;
}
.task-active {
    width: 48px;
    margin-left: 10px;
    background: #444;
}
.task-open {
    width: 41px;
    margin-left: 4px;
}
.task-logo {
    width: 24px;
    height: 24px;
}
.tray {
    margin-left: auto;
    height: 40px;
    display: flex;
    align-items: center;
    color: #e4e4e4;
}
.tray-icon {
    width: 16px;
    height: 18px;
    margin-left: 7px;
}
.chevron {
    width: 12px;
    height: 9px;
    margin-left: 0;
}
.tray-cam {
    margin-left: 11px;
}
.tray-vol {
    margin-left: 8px;
}
.tray-lang {
    margin-left: 11px;
    font-size: 12.5px;
}
.clock {
    width: 60px;
    margin-left: 9px;
    text-align: center;
    line-height: 18px;
    font-size: 12.5px;
}
.notify {
    margin-left: 14px;
}
.show-desktop {
    width: 1px;
    height: 40px;
    margin: 0 4px 0 20px;
    background: #666;
}
```
